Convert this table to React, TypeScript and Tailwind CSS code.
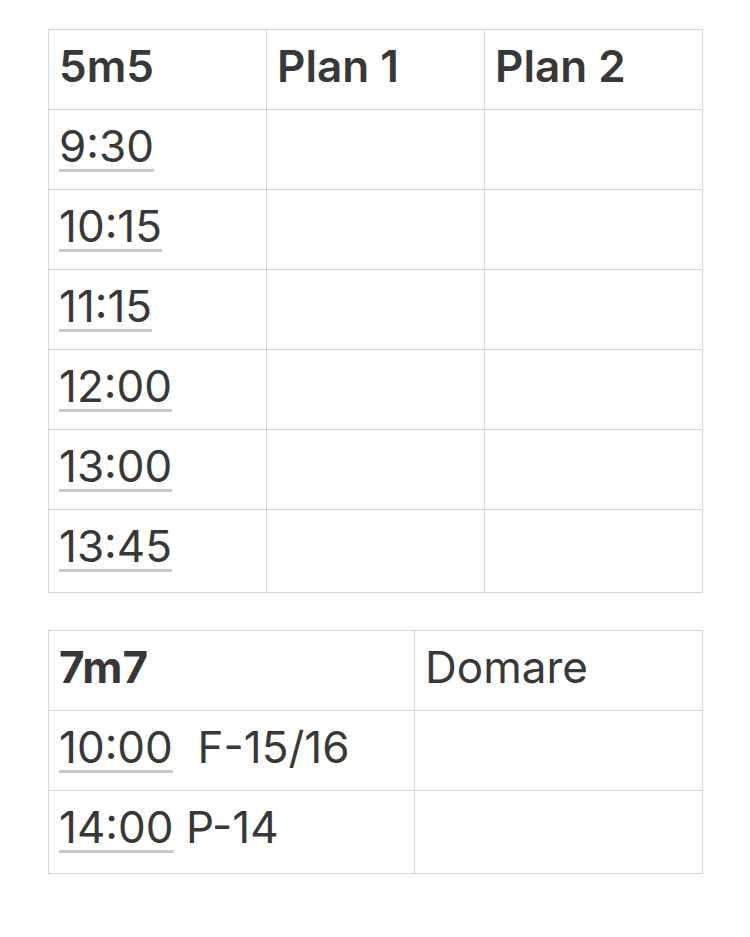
import React from 'react';

const font = { fontFamily: 'Inter, "Liberation Sans", sans-serif' };

const Time: React.FC<{ t: string }> = ({ t }) => (
  <span className="underline decoration-[#c9c9c9] decoration-[3px] underline-offset-[7px]">{t}</span>
);

const rows = ['9:30', '10:15', '11:15', '12:00', '13:00', '13:45'];

export default function App() {
  const cell = 'border border-[#d6d6d6] pl-[10px] pt-[10px] align-top leading-[53px]';
  return (
    <div className="min-h-[937px] w-[750px] bg-white text-[44px] text-[#383838]" style={font}>
      <div className="px-[48px] pt-[29px]">
        <table className="w-[654px] table-fixed border-collapse">
          <colgroup>
            <col className="w-[218px]" />
            <col className="w-[218px]" />
            <col className="w-[218px]" />
          </colgroup>
          <thead>
            <tr className="h-[80px]">
              <th className={`${cell} text-left font-semibold`}>5m5</th>
              <th className={`${cell} text-left font-semibold`}>Plan 1</th>
              <th className={`${cell} text-left font-semibold`}>Plan 2</th>
            </tr>
          </thead>
          <tbody>
            {rows.map((t, i) => (
              <tr key={t} className={i === rows.length - 1 ? 'h-[83px]' : 'h-[80px]'}>
                <td className={cell}>
                  <Time t={t} />
                </td>
                <td className={cell}></td>
                <td className={cell}></td>
              </tr>
            ))}
          </tbody>
        </table>

        <table className="mt-[37px] w-[654px] table-fixed border-collapse">
          <colgroup>
            <col className="w-[366px]" />
            <col className="w-[288px]" />
          </colgroup>
          <tbody>
            <tr className="h-[80px]">
              <td className={`${cell} font-bold`}>7m7</td>
              <td className={cell}>Domare</td>
            </tr>
            <tr className="h-[80px]">
              <td className={`${cell} whitespace-pre`}>
                <Time t="10:00" />{'  F-15/16'}
              </td>
              <td className={cell}></td>
            </tr>
            <tr className="h-[83px]">
              <td className={`${cell} whitespace-pre`}>
                <Time t="14:00" />{' P-14'}
              </td>
              <td className={cell}></td>
            </tr>
          </tbody>
        </table>
      </div>
    </div>
  );
}
